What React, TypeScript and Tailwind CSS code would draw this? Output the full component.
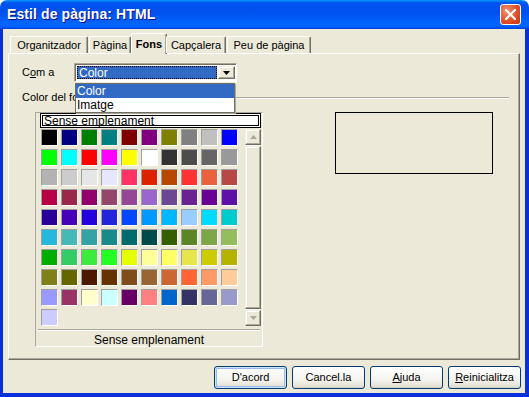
import React from 'react';

const palette = [
  '#000000', '#000080', '#008000', '#008080', '#800000', '#800080', '#808000', '#808080', '#C0C0C0', '#0000FF',
  '#00FF00', '#00FFFF', '#FF0000', '#FF00FF', '#FFFF00', '#FFFFFF', '#333333', '#4C4C4C', '#666666', '#999999',
  '#B3B3B3', '#CCCCCC', '#E6E6E6', '#E6E6FF', '#FF3366', '#DC2300', '#B84700', '#FF3333', '#EB613D', '#B84747',
  '#B80047', '#99284C', '#94006B', '#94476B', '#944794', '#9966CC', '#6B4794', '#6B2394', '#6B0094', '#5E11A6',
  '#280099', '#4700B8', '#2300DC', '#2323DC', '#0047FF', '#0099FF', '#00B8FF', '#99CCFF', '#00DCFF', '#00CCCC',
  '#23B8DC', '#47B8B8', '#33A3A3', '#198A8A', '#006B6B', '#004A4A', '#355E00', '#5C8526', '#7DA647', '#94BD5E',
  '#00AE00', '#33CC66', '#3DEB3D', '#23FF23', '#E6FF00', '#FFFF99', '#FFFF66', '#E6E64C', '#CCCC00', '#B3B300',
  '#808019', '#666600', '#4C1900', '#663300', '#804C19', '#996633', '#CC6633', '#FF6633', '#FF9966', '#FFCC99',
  '#9999FF', '#993366', '#FFFFCC', '#CCFFFF', '#660066', '#FF8080', '#0066CC', '#333366', '#666699', '#9999CC',
  '#CCCCFF',
];

const tabs = [
  { label: 'Organitzador', w: 'w-[78px]' },
  { label: 'Pàgina', w: 'w-[42px]' },
  { label: 'Fons', w: 'w-[36px]', active: true },
  { label: 'Capçalera', w: 'w-[60px]' },
  { label: 'Peu de pàgina', w: 'w-[84px]' },
];

function ScrollArrow({ up }: { up?: boolean }) {
  return (
    <div className="w-[16px] h-[16px] shrink-0 bg-[#ECE9D8] border border-t-[#F1EFE2] border-l-[#F1EFE2] border-r-[#716F64] border-b-[#716F64] shadow-[inset_-1px_-1px_0_#ACA899,inset_1px_1px_0_#fff] flex items-center justify-center">
      <svg width="7" height="4" viewBox="0 0 7 4">
        {up ? <path d="M3.5 0 L7 4 L0 4 Z" fill="#ACA899" /> : <path d="M0 0 L7 0 L3.5 4 Z" fill="#ACA899" />}
      </svg>
    </div>
  );
}

function XPButton({ children, primary }: { children: React.ReactNode; primary?: boolean }) {
  return (
    <button
      className={`w-[73px] h-[23px] rounded-[3px] border border-[#003C74] bg-[linear-gradient(to_bottom,#FFFFFF,#F4F3EE_60%,#E6E3D6_90%,#D6D0C5)] text-[11px] text-black flex items-center justify-center ${primary ? 'shadow-[inset_0_0_0_1px_#CEE7FF,inset_0_0_0_2px_#98B8EA]' : ''}`}
    >
      {children}
    </button>
  );
}

export default function App() {
  return (
    <div className="w-[529px] h-[397px] bg-white flex flex-col font-['Liberation_Sans',Arial,sans-serif] text-[11px] text-black select-none">
      {/* title bar */}
      <div className="h-[29px] shrink-0 rounded-t-[7px] bg-[linear-gradient(to_bottom,#0997FF,#0053EE_10%,#0050EE_40%,#0066FF_85%,#005BFF_93%,#003DD7)] flex items-center pl-[7px] pr-[8px]">
        <span className="flex-1 text-white font-bold text-[14px] tracking-[0.1px] [text-shadow:1px_1px_#0F1089]">Estil de pàgina: HTML</span>
        <div className="w-[21px] h-[21px] rounded-[3px] border border-white bg-[radial-gradient(circle_at_30%_30%,#F0906C,#E0502B_55%,#C3370F)] flex items-center justify-center">
          <svg width="11" height="11" viewBox="0 0 11 11">
            <path d="M1 1 L10 10 M10 1 L1 10" stroke="white" strokeWidth="2.2" strokeLinecap="square" />
          </svg>
        </div>
      </div>

      {/* client */}
      <div className="flex-1 flex flex-col bg-[#ECE9D8] border-l-[3px] border-r-[4px] border-b-[4px] border-[#0831D9]">
        {/* tabs */}
        <div className="h-[24px] shrink-0 flex items-end pl-[7px] pr-[5px] relative z-10">
          {tabs.map((t) =>
            t.active ? (
              <div
                key={t.label}
                className={`${t.w} h-[21px] -mb-px -mx-[1px] bg-[#ECE9D8] border-t border-l border-white border-r border-r-[#716F64] rounded-t-[2px] flex items-center justify-center font-bold shadow-[inset_-1px_0_0_#ACA899]`}
              >
                {t.label}
              </div>
            ) : (
              <div
                key={t.label}
                className={`${t.w} h-[17px] mr-[1px] bg-[#ECE9D8] border-t border-l border-white border-r border-r-[#716F64] rounded-t-[2px] flex items-center justify-center shadow-[inset_-1px_0_0_#ACA899]`}
              >
                {t.label}
              </div>
            )
          )}
        </div>

        {/* panel */}
        <div className="h-[307px] shrink-0 mx-[5px] border border-t-white border-l-white border-r-[#716F64] border-b-[#716F64] shadow-[inset_-1px_-1px_0_#ACA899] flex flex-col">
          <div className="flex items-center pt-[9px] pl-[13px]">
            <span className="w-[52px]">
              C<span className="underline">o</span>m a
            </span>
            <div className="relative w-[163px] h-[19px] border border-t-[#ACA899] border-l-[#ACA899] border-r-white border-b-white shadow-[inset_1px_1px_0_#716F64] bg-white flex items-stretch p-[2px] pr-[1px]">
              <div className="flex-1 bg-[#316AC5] text-white border border-dotted border-[#000] flex items-center pl-[1px] leading-none text-[12px]">
                Color
              </div>
              <div className="w-[17px] ml-[1px] bg-[#ECE9D8] border border-t-[#F1EFE2] border-l-[#F1EFE2] border-r-[#716F64] border-b-[#716F64] shadow-[inset_-1px_-1px_0_#ACA899,inset_1px_1px_0_#fff] flex items-center justify-center">
                <svg width="7" height="4" viewBox="0 0 7 4">
                  <path d="M0 0 L7 0 L3.5 4 Z" fill="black" />
                </svg>
              </div>
              {/* open dropdown list */}
              <div className="absolute left-[0px] top-[19px] w-[160px] bg-white border border-[#716F64] shadow-[1px_1px_0_#ACA899] flex flex-col text-[12px] leading-none">
                <div className="h-[14px] bg-[#316AC5] text-white flex items-center pl-[1px]">Color</div>
                <div className="h-[14px] flex items-center pl-[1px]">Imatge</div>
              </div>
            </div>
          </div>

          <div className="flex items-center mt-[9px] pl-[13px] pr-[10px] h-[13px]">
            <span>Color del fons</span>
            <div className="flex-1 ml-[4px] border-t border-t-[#ACA899] border-b border-b-white" />
          </div>

          <div className="flex items-start mt-[8px] pl-[26px]">
            {/* colour set */}
            <div className="w-[228px] h-[235px] border border-t-[#ACA899] border-l-[#ACA899] border-r-white border-b-white flex flex-col">
              <div className="ml-[4px] mt-0 w-[221px] h-[15px] border border-black bg-white p-[1px]">
                <div className="h-full border border-black bg-white flex items-center pl-[1px] text-[12px] leading-none">
                  Sense emplenament
                </div>
              </div>
              <div className="flex mt-[1px] ml-[5px]">
                <div className="grid grid-cols-[repeat(10,17px)] auto-rows-[17px] gap-[3px] h-[197px] content-start">
                  {palette.map((c, i) => (
                    <div
                      key={i}
                      className="border border-t-[#A0A0A0] border-l-[#A0A0A0] border-r-white border-b-white"
                      style={{ backgroundColor: c }}
                    />
                  ))}
                </div>
                <div className="ml-[7px] w-[16px] h-[197px] flex flex-col bg-[#F4F3EE]">
                  <ScrollArrow up />
                  <div className="flex-1 my-[1px] bg-[#ECE9D8] border border-t-[#F1EFE2] border-l-[#F1EFE2] border-r-[#716F64] border-b-[#716F64] shadow-[inset_-1px_-1px_0_#ACA899,inset_1px_1px_0_#fff]" />
                  <ScrollArrow />
                </div>
              </div>
              <div className="mx-[2px] mt-[3px] border-t border-t-[#ACA899] border-b border-b-white" />
              <div className="flex-1 flex items-center justify-center text-[12px] pb-[1px]">Sense emplenament</div>
            </div>

            {/* preview */}
            <div className="ml-[72px] w-[158px] h-[62px] border border-black" />
          </div>
        </div>

        {/* buttons */}
        <div className="flex justify-end gap-[5px] mt-[6px] pr-[4px]">
          <XPButton primary>D'acord</XPButton>
          <XPButton>Cancel.la</XPButton>
          <XPButton>
            <span>
              <span className="underline">A</span>juda
            </span>
          </XPButton>
          <XPButton>
            <span>
              <span className="underline">R</span>einicialitza
            </span>
          </XPButton>
        </div>
      </div>
    </div>
  );
}
